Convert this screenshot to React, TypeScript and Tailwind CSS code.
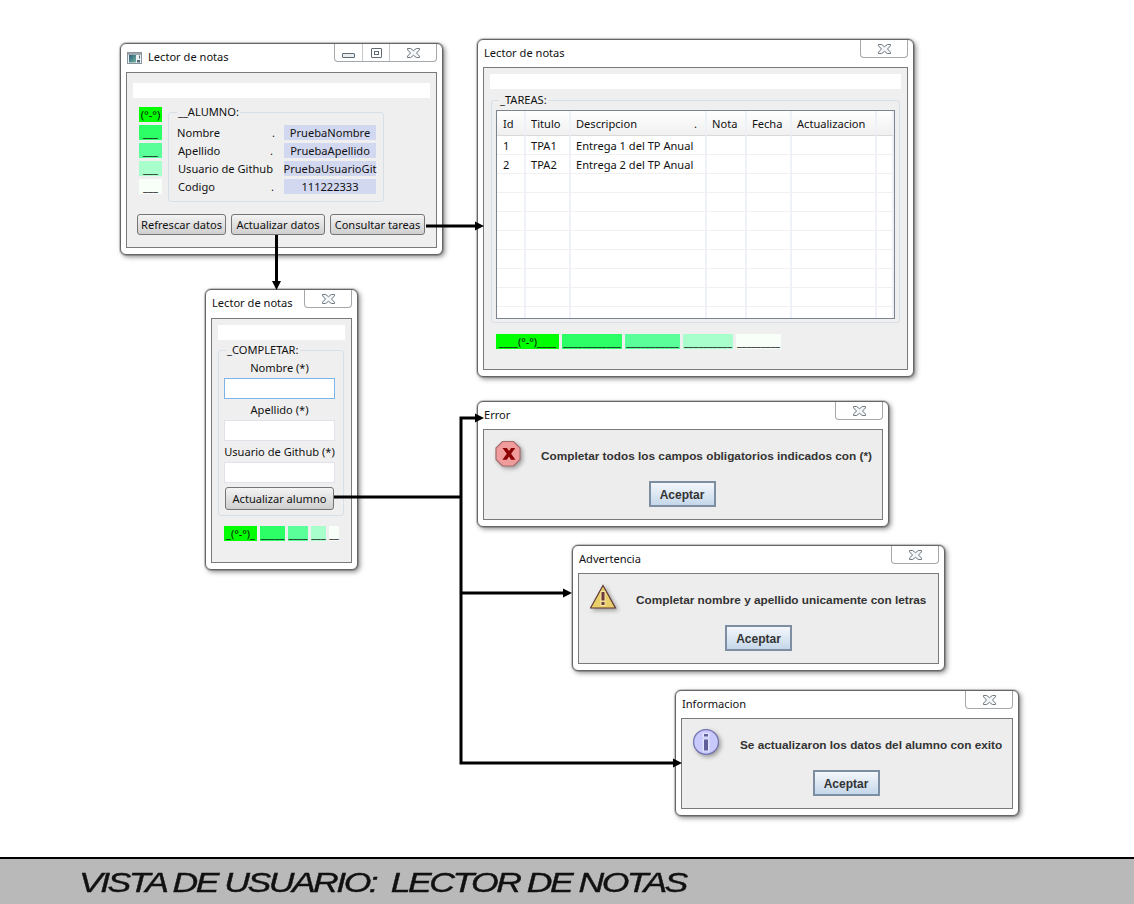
import type { ReactNode } from 'react'

const UI = "font-['Noto_Sans',sans-serif] text-[11.1px] leading-[16px] text-[#111]"
const ARIAL = "font-['Liberation_Sans',sans-serif]"

function CloseGlyph() {
  return (
    <svg width="17" height="12" viewBox="0 0 17 12">
      <path
        d="M2.500 1.500h3.200L8.500 3.700 11.300 1.500h3.200v1.300L11.500 6l3 3.200v1.300h-3.200L8.500 8.300 5.700 10.500H2.500V9.200L5.500 6l-3-3.200z"
        fill="#f4f6f8"
        stroke="#6d7780"
      />
    </svg>
  )
}

function WindowButtons({ full }: { full?: boolean }) {
  return (
    <div className="absolute top-0 right-[5px] flex h-[18px] rounded-b-[4px] border border-t-0 border-[#a3a8ad] bg-white">
      {full && (
        <>
          <div className="flex w-[28px] items-center justify-center border-r border-[#c4c8cc]">
            <div className="mt-[5px] h-[5px] w-[13px] rounded-[1px] border border-[#5f6b75] bg-[#e9edf0]" />
          </div>
          <div className="flex w-[27px] items-center justify-center border-r border-[#c4c8cc]">
            <div className="flex h-[10px] w-[11px] items-center justify-center rounded-[1px] border border-[#5f6b75]">
              <div className="h-[4px] w-[5px] border border-[#5f6b75]" />
            </div>
          </div>
        </>
      )}
      <div className="flex w-[46px] items-center justify-center">
        <CloseGlyph />
      </div>
    </div>
  )
}

function AppIcon() {
  return (
    <svg width="15" height="12" viewBox="0 0 15 12" className="mt-[2px]">
      <defs>
        <linearGradient id="appFill" x1="0" y1="0" x2="1" y2="1">
          <stop offset="0" stopColor="#2c5f7c" />
          <stop offset="1" stopColor="#6fb39c" />
        </linearGradient>
      </defs>
      <rect x="0.500" y="0.500" width="14" height="11" fill="#eef1f3" stroke="#8b949b" />
      <rect x="1" y="1" width="13" height="2" fill="#9fa8ae" />
      <rect x="2" y="3" width="7" height="7.500" fill="url(#appFill)" />
      <rect x="10" y="8" width="3" height="2.500" fill="#4c6a78" />
      <rect x="12" y="3.500" width="1" height="3" fill="#4c6a78" />
    </svg>
  )
}

function Ventana({
  title,
  box,
  alto = 'h-[27px]',
  full,
  icon,
  children,
}: {
  title: string
  box: string
  alto?: string
  full?: boolean
  icon?: boolean
  children: ReactNode
}) {
  return (
    <div
      className={`absolute flex flex-col rounded-[6px] border border-[#666] bg-white px-[5px] pb-[6px] shadow-[0_0_0_1px_rgba(0,0,0,0.18),2px_2px_5px_rgba(0,0,0,0.45)] ${box} ${UI}`}
    >
      <WindowButtons full={full} />
      <div className={`flex shrink-0 items-center gap-[6px] pb-[2px] pl-[1px] ${alto}`}>
        {icon && <AppIcon />}
        <span>{title}</span>
      </div>
      {children}
    </div>
  )
}

function Grupo({
  legend,
  sangria,
  className,
  children,
}: {
  legend: string
  sangria: string
  className?: string
  children: ReactNode
}) {
  return (
    <fieldset className={`rounded-[3px] border border-[#d7e0e8] ${className ?? ''}`}>
      <legend className={`px-[1px] leading-[16px] ${sangria}`}>{legend}</legend>
      {children}
    </fieldset>
  )
}

const VERDES = ['bg-[#00ff00]', 'bg-[#2dff66]', 'bg-[#5aff99]', 'bg-[#a8ffcb]', 'bg-[#f8fff9]']

function Semaforo({ celdas }: { celdas: { w: string; text: string }[] }) {
  return (
    <div className="flex gap-[3px]">
      {celdas.map((c, i) => (
        <div
          key={i}
          className={`flex h-[15px] items-center justify-center whitespace-nowrap text-[10.8px] leading-[15px] ${c.w} ${VERDES[i]}`}
        >
          {c.text}
        </div>
      ))}
    </div>
  )
}

const ALUMNO = [
  { label: 'Nombre', value: 'PruebaNombre', dot: 'mr-[9px]', indent: '' },
  { label: 'Apellido', value: 'PruebaApellido', dot: 'mr-[11px]', indent: 'ml-[1px]' },
  { label: 'Usuario de Github', value: 'PruebaUsuarioGit', dot: 'hidden', indent: 'ml-[1px]' },
  { label: 'Codigo', value: '111222333', dot: 'mr-[10px]', indent: 'ml-[1px]' },
]

function BotonGris({ w, children }: { w: string; children: ReactNode }) {
  return (
    <div
      className={`flex items-center justify-center whitespace-nowrap rounded-[3px] border border-[#757575] bg-gradient-to-b from-[#f4f4f4] to-[#cfcfcf] ${w}`}
    >
      {children}
    </div>
  )
}

function VentanaAlumno() {
  return (
    <Ventana title="Lector de notas" box="left-[120px] top-[43px] w-[323px] h-[212px]" alto="h-[28px]" full icon>
      <div className="flex flex-1 flex-col border border-[#7a7a7a] bg-[#efefef] px-[6px] pt-[10px]">
        <div className="h-[15px] bg-white" />
        <div className="mt-[6px] flex">
          <div className="ml-[6px] mt-[3px] flex w-[23px] flex-col gap-[3px]">
            {['(°-°)', '___', '___', '___', '___'].map((t, i) => (
              <div key={i} className={`flex h-[15px] items-center justify-center leading-[15px] ${VERDES[i]}`}>
                {t}
              </div>
            ))}
          </div>
          <Grupo legend="__ALUMNO:" sangria="ml-0" className="ml-[6px] w-[216px] pb-[7px] pl-[8px] pr-[7px] pt-[5px]">
            <div className="flex flex-col gap-[3px]">
              {ALUMNO.map(a => (
                <div key={a.label} className="flex h-[15px] leading-[15px]">
                  <div className="flex flex-1 justify-between">
                    <span className={a.indent}>{a.label}</span>
                    <span className={a.dot}>.</span>
                  </div>
                  <div className="flex w-[92px] items-center justify-center whitespace-nowrap bg-[#d2d8ef]">
                    {a.value}
                  </div>
                </div>
              ))}
            </div>
          </Grupo>
        </div>
        <div className="ml-[4px] mt-[12px] flex h-[21px] gap-[5px]">
          <BotonGris w="w-[89px]">Refrescar datos</BotonGris>
          <BotonGris w="w-[94px]">Actualizar datos</BotonGris>
          <BotonGris w="w-[95px]">Consultar tareas</BotonGris>
        </div>
      </div>
    </Ventana>
  )
}

const COLUMNAS = ['w-[29px]', 'w-[45px]', 'w-[136px]', 'w-[40px]', 'w-[45px]', 'w-[85px]', 'w-[17px]']
const TAREAS = [
  ['1', 'TPA1', 'Entrega 1 del TP Anual'],
  ['2', 'TPA2', 'Entrega 2 del TP Anual'],
  ...Array.from({ length: 8 }, () => ['', '', '']),
]

function VentanaTareas() {
  return (
    <Ventana title="Lector de notas" box="left-[477px] top-[39px] w-[437px] h-[338px]">
      <div className="flex flex-1 flex-col border border-[#7a7a7a] bg-[#efefef] px-[6px] pt-[6px]">
        <div className="h-[15px] bg-white" />
        <Grupo legend="_TAREAS:" sangria="ml-[3px]" className="mx-[1px] mt-[3px] h-[231px] px-[4px]">
          <div className="mt-[2px] h-[209px] overflow-hidden border border-[#7c8490] bg-white">
            <table className="w-[397px] table-fixed border-separate border-spacing-0">
              <colgroup>
                {COLUMNAS.map(c => (
                  <col key={c} className={c} />
                ))}
              </colgroup>
              <thead>
                <tr className="h-[25px] bg-gradient-to-b from-white to-[#efefef]">
                  {['Id', 'Titulo', 'Descripcion', 'Nota', 'Fecha', 'Actualizacion', ''].map((h, j) => (
                    <th
                      key={h}
                      className={`border-b border-r-2 border-b-[#d9d9d9] border-r-[#eef1f7] pr-[4px] pt-[2px] text-left font-normal ${j === 0 ? 'pl-[6px]' : 'pl-[5px]'}`}
                    >
                      {h === 'Descripcion' ? (
                        <span className="flex justify-between pr-[4px]">
                          {h}
                          <span>.</span>
                        </span>
                      ) : (
                        h
                      )}
                    </th>
                  ))}
                </tr>
              </thead>
              <tbody>
                {TAREAS.map((t, i) => (
                  <tr key={i} className="h-[19px]">
                    {[...t, '', '', '', ''].map((c, j) => (
                      <td
                        key={j}
                        className={`whitespace-nowrap border-b border-r-2 border-b-[#f0f0f0] border-r-[#eef1f7] pr-[4px] pt-[1px] align-middle ${j === 0 ? 'pl-[6px]' : 'pl-[5px]'}`}
                      >
                        {c}
                      </td>
                    ))}
                  </tr>
                ))}
              </tbody>
            </table>
          </div>
        </Grupo>
        <div className="ml-[6px] mt-[11px]">
          <Semaforo
            celdas={[
              { w: 'w-[63px]', text: '____(°-°)____' },
              { w: 'w-[60px]', text: '____________' },
              { w: 'w-[55px]', text: '___________' },
              { w: 'w-[50px]', text: '__________' },
              { w: 'w-[45px]', text: '_________' },
            ]}
          />
        </div>
      </div>
    </Ventana>
  )
}

function Campo({ label, focused }: { label: string; focused?: boolean }) {
  return (
    <div className="flex flex-col">
      <div className="h-[18px] whitespace-nowrap text-center">{label}</div>
      <input
        readOnly
        className={`h-[21px] w-[111px] border bg-white ${focused ? 'border-[#7eb4ea]' : 'border-[#e2e3ea]'}`}
      />
    </div>
  )
}

function VentanaCompletar() {
  return (
    <Ventana title="Lector de notas" box="left-[205px] top-[289px] w-[153px] h-[281px]" alto="h-[28px]">
      <div className="flex flex-1 flex-col border border-[#7a7a7a] bg-[#efefef] px-[6px] pt-[6px]">
        <div className="h-[15px] bg-white" />
        <Grupo legend="_COMPLETAR:" sangria="ml-[2px]" className="mr-[1px] mt-[2px] pb-[5px] pl-[5px] pr-[8px]">
          <div className="mt-[2px] flex flex-col gap-[3px]">
            <Campo label="Nombre (*)" focused />
            <Campo label="Apellido (*)" />
            <Campo label="Usuario de Github (*)" />
          </div>
          <BotonGris w="ml-[1px] mt-[4px] h-[23px] w-[109px]">Actualizar alumno</BotonGris>
        </Grupo>
        <div className="ml-[6px] mt-[10px]">
          <Semaforo
            celdas={[
              { w: 'w-[33px]', text: '_(°-°)_' },
              { w: 'w-[25px]', text: '_____' },
              { w: 'w-[20px]', text: '____' },
              { w: 'w-[15px]', text: '___' },
              { w: 'w-[10px]', text: '__' },
            ]}
          />
        </div>
      </div>
    </Ventana>
  )
}

const SOMBRA_ICONO = 'shrink-0 drop-shadow-[2px_2px_2px_rgba(0,0,0,0.35)]'

function IconoError() {
  return (
    <svg width="30" height="30" viewBox="0 0 30 30" className={SOMBRA_ICONO}>
      <path
        d="M8.500 1.500h11l6.500 6.500v11.500l-6.500 6.500h-11L2 19.500V8z"
        transform="translate(-1 0)"
        fill="#f19c9c"
        stroke="#a56a6a"
        strokeWidth="1.200"
      />
      <path d="M7.500 8h4.400l2.100 3 2.100-3h4.200l-4.200 5.800 4.400 6h-4.500L14 16.600l-2.200 3.200H7.400l4.400-6z" fill="#8b0000" />
    </svg>
  )
}

function IconoAviso() {
  return (
    <svg width="30" height="30" viewBox="0 0 30 30" className={SOMBRA_ICONO}>
      <path d="M13 1.500L25.500 24H.5z" fill="#e8cf6a" stroke="#5e3535" strokeWidth="1.200" />
      <rect x="10.500" y="7" width="5" height="15" fill="#f3e6a8" />
      <rect x="11.500" y="8" width="3" height="8.500" fill="#6e3a3a" />
      <rect x="11.500" y="18" width="3" height="3" fill="#6e3a3a" />
    </svg>
  )
}

function IconoInfo() {
  return (
    <svg width="30" height="30" viewBox="0 0 30 30" className={SOMBRA_ICONO}>
      <circle cx="13" cy="13" r="12.400" fill="#c9c9fb" stroke="#7070b0" strokeWidth="1.200" />
      <rect x="9.500" y="4" width="7" height="4.500" fill="#e4e4ff" />
      <rect x="9.500" y="9.500" width="7" height="13" fill="#e4e4ff" />
      <rect x="11" y="5" width="4" height="2.500" fill="#5f5f99" />
      <rect x="11" y="10.500" width="4" height="11" fill="#5f5f99" />
    </svg>
  )
}

function Dialogo({
  title,
  box,
  alto,
  icon,
  gap,
  boton,
  text,
}: {
  title: string
  box: string
  alto?: string
  icon: ReactNode
  gap: string
  boton?: string
  text: string
}) {
  return (
    <Ventana title={title} box={box} alto={alto}>
      <div className="flex flex-1 flex-col items-center border border-[#7a7a7a] bg-[#ededed] pt-[10px]">
        <div className={`flex h-[30px] w-full items-center pl-[11px] ${gap}`}>
          {icon}
          <span className={`mt-[2px] whitespace-nowrap text-[11.8px] font-bold text-[#333] ${ARIAL}`}>{text}</span>
        </div>
        <div
          className={`mt-[11px] flex h-[26px] w-[67px] items-center justify-center border-2 border-[#7d8ea3] bg-gradient-to-b from-[#f4f7fb] to-[#c5d7ea] pt-[1px] text-[12px] font-bold text-[#333] ${ARIAL} ${boton ?? ''}`}
        >
          Aceptar
        </div>
      </div>
    </Ventana>
  )
}

function Conectores() {
  return (
    <svg className="pointer-events-none absolute inset-0" width="1134" height="857" viewBox="0 0 1134 857">
      <g stroke="#000" strokeWidth="3" fill="none" strokeLinejoin="miter">
        <path d="M426 226H476" />
        <path d="M276.500 235V282" />
        <path d="M334 497H461" />
        <path d="M476 418H461V763H674" />
        <path d="M461 593H564" />
      </g>
      <g fill="#000">
        <path d="M484 226l-9-4.500v9z" />
        <path d="M276.500 290l-4.500-9h9z" />
        <path d="M484 418l-9-4.500v9z" />
        <path d="M572 593l-9-4.500v9z" />
        <path d="M682 763l-9-4.500v9z" />
      </g>
    </svg>
  )
}

export default function App() {
  return (
    <div className="flex h-[904px] w-[1134px] flex-col overflow-hidden bg-white">
      <div className="relative flex-1">
        <VentanaAlumno />
        <VentanaTareas />
        <VentanaCompletar />
        <Dialogo
          title="Error"
          box="left-[477px] top-[401px] w-[412px] h-[126px]"
          icon={<IconoError />}
          gap="gap-[16px]"
          boton="mr-[2px]"
          text="Completar todos los campos obligatorios indicados con (*)"
        />
        <Dialogo
          title="Advertencia"
          box="left-[572px] top-[545px] w-[373px] h-[126px]"
          alto="h-[27px]"
          icon={<IconoAviso />}
          gap="gap-[16px]"
          text="Completar nombre y apellido unicamente con letras"
        />
        <Dialogo
          title="Informacion"
          box="left-[675px] top-[690px] w-[344px] h-[126px]"
          alto="h-[27px]"
          icon={<IconoInfo />}
          gap="gap-[17px]"
          boton="mr-[2px]"
          text="Se actualizaron los datos del alumno con exito"
        />
        <Conectores />
      </div>
      <div className="flex h-[47px] shrink-0 items-center border-t-2 border-black bg-[#b9b9b9] pl-[79px] pt-[3px]">
        <span
          className={`origin-left scale-x-[1.272] whitespace-pre text-[28px] italic tracking-[-2px] text-[#111] [-webkit-text-stroke:0.4px_#111] ${ARIAL}`}
        >
          VISTA DE USUARIO:  LECTOR DE NOTAS
        </span>
      </div>
    </div>
  )
}
